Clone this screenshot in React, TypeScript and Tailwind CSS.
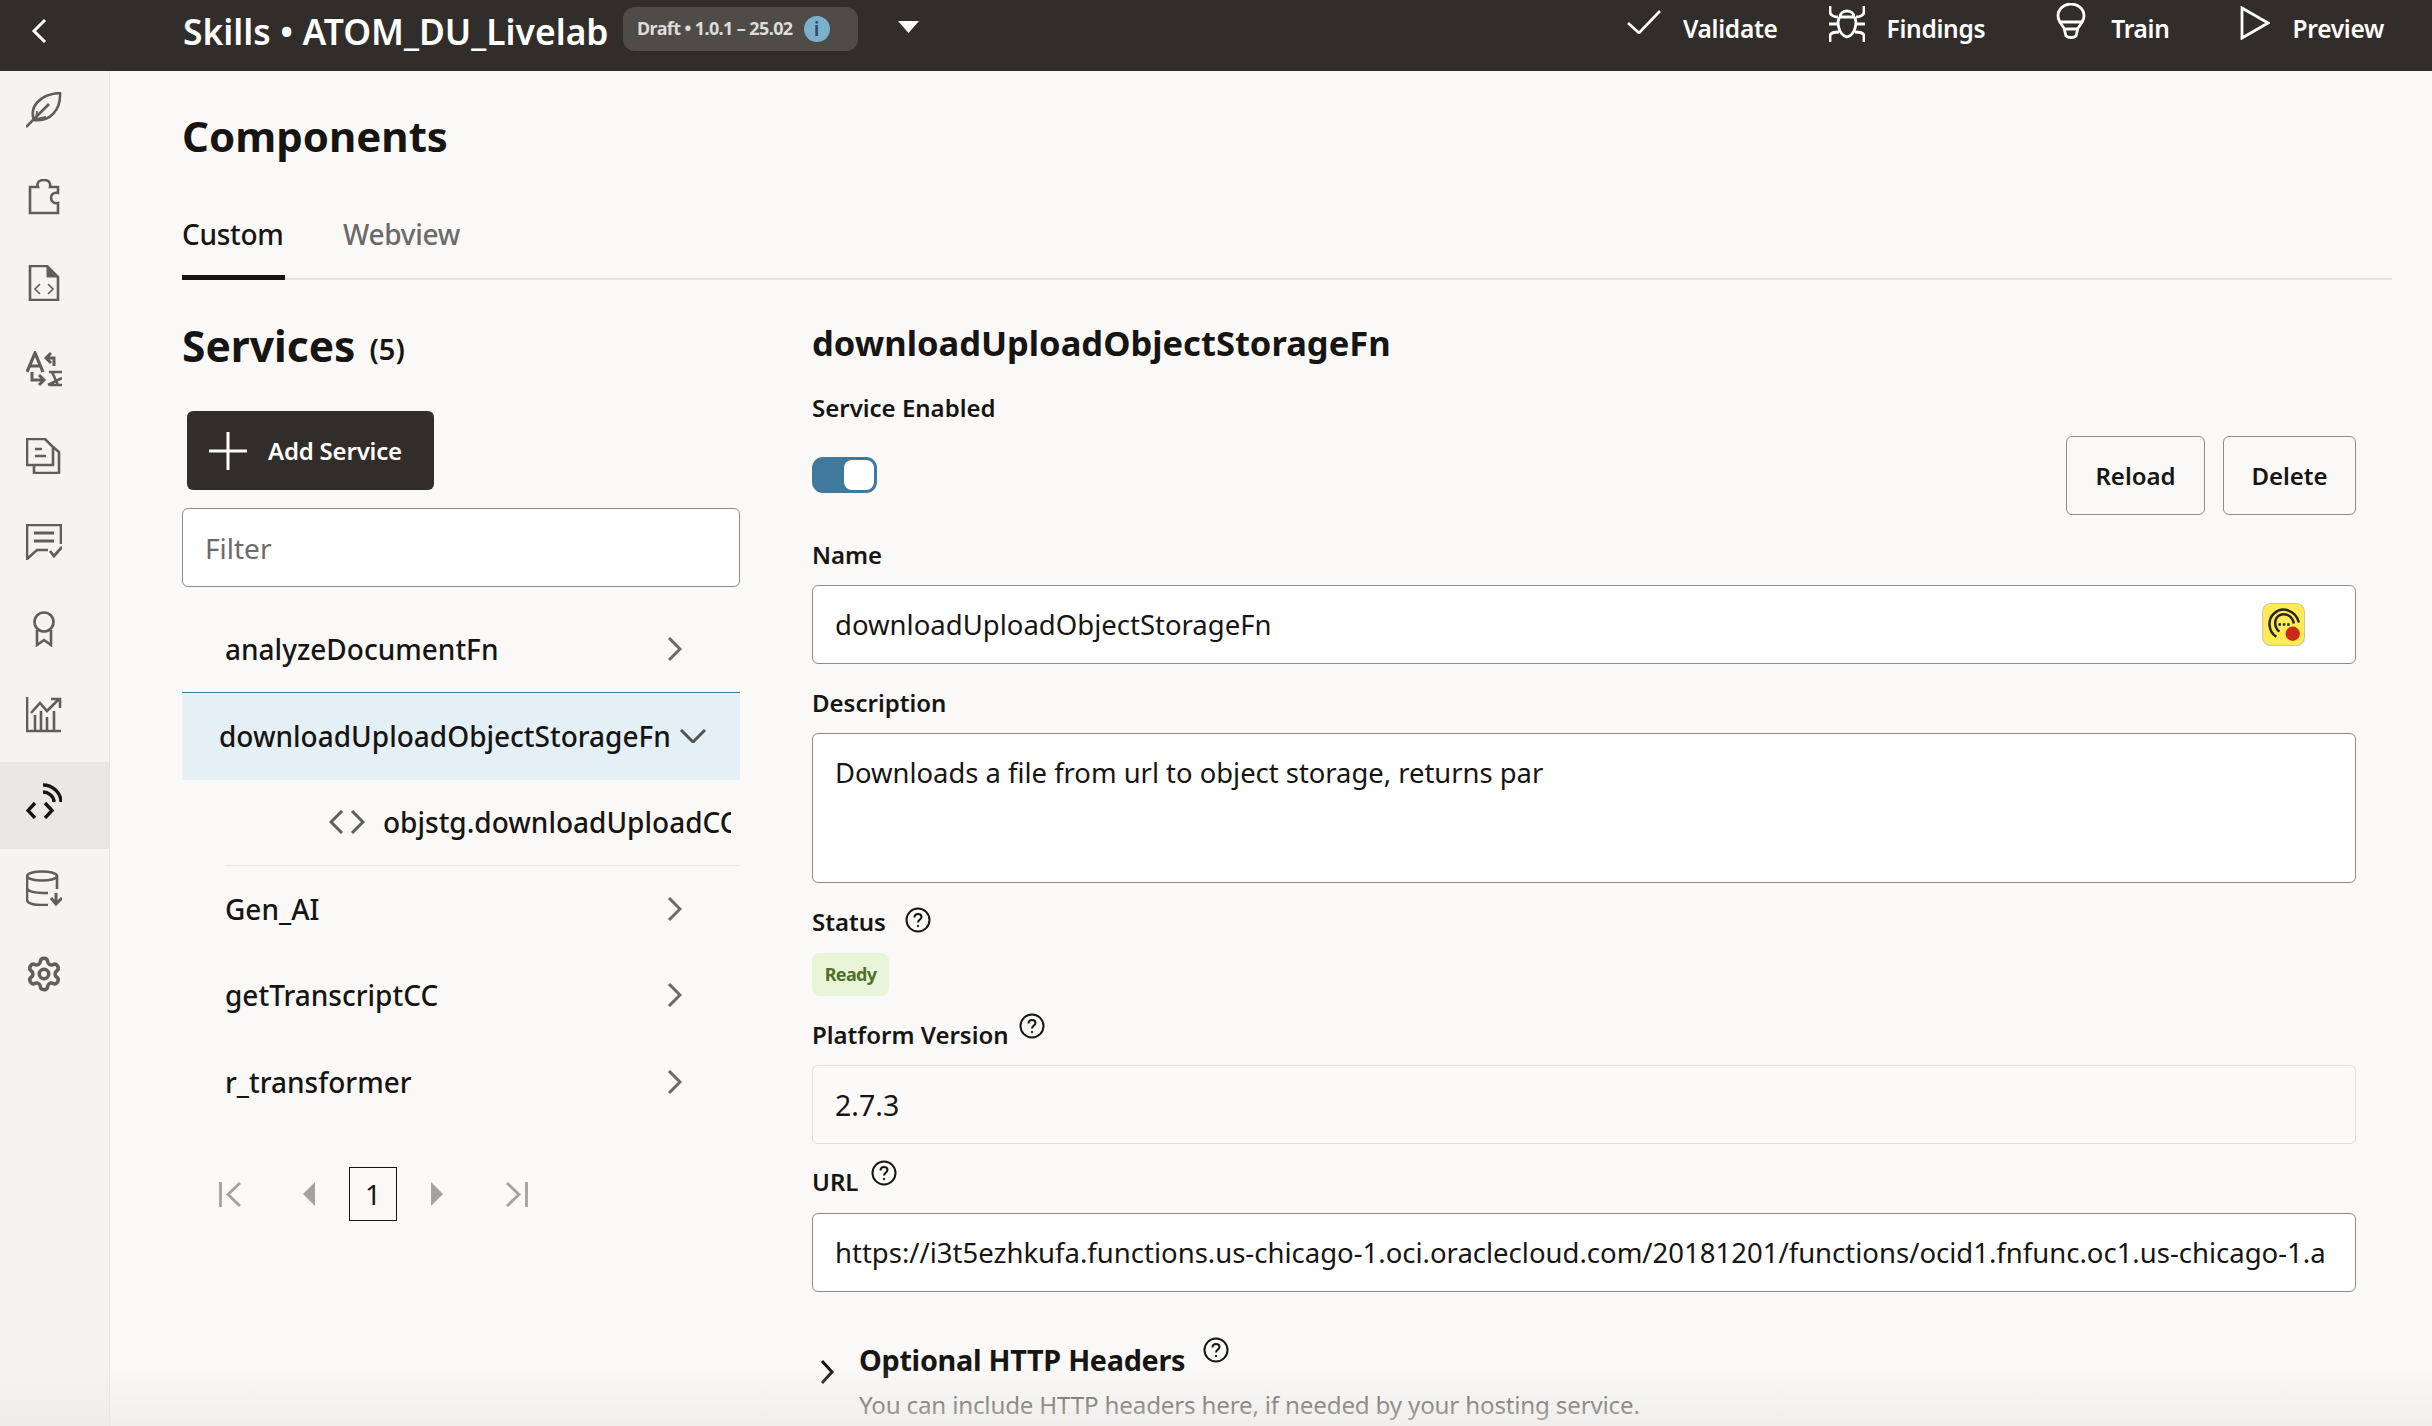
import React from "react";
import { Settings } from "lucide-react";

const Ic = ({ children, className = "" }: { children: React.ReactNode; className?: string }) => (
  <svg viewBox="0 0 36 36" fill="none" stroke="currentColor" strokeWidth="2.6" className={"w-9 h-9 " + className}>
    {children}
  </svg>
);

const sideIcons: React.ReactNode[] = [
  <Ic><path d="M8 28 C3 15 14 2 34 1 C35 18 24 30 8 28 Z" /><path d="M0 35 L23 12" /><path d="M11 19 L10 27 L20 25" strokeWidth="1.8" /></Ic>,
  <Ic><path d="M4 8 H12 C10 3 14 1 18 1 C22 1 25 3 24 8 H32 V14 C27 13 25 16 25 19 C25 22 28 25 32 24 V34 H4 Z" /></Ic>,
  <Ic><path d="M4 1 H21 L32 12 V35 H4 Z" /><path d="M21 2 L31 12 H21 Z" fill="currentColor" strokeWidth="1" /><path d="M14 19 L9 24 L14 29 M22 19 L27 24 L22 29" strokeWidth="1.6" /></Ic>,
  <Ic><path d="M1 21 L9 2 L17 21 M4 15 H14" strokeWidth="3.2" /><path d="M28 15 V7 H20 M25 2 L20 7 L25 12" strokeWidth="3" /><path d="M6 21 V29 H16 M13 24 L18 29 L13 34" strokeWidth="3" /><path d="M23 21 H36 M26 21 L32 34 M22 34 L36 27 M24 34 H36" strokeWidth="2.6" /></Ic>,
  <Ic><path d="M1 1 H19 L27 9 V27 H1 Z" /><path d="M8 28 V35 H33 V14 L27 9" /><path d="M9 11 H16 M9 18 H20" /></Ic>,
  <Ic><path d="M35 20 V1 H1 V35 L11 26 H22" /><path d="M8 9 H28 M8 17 H28" strokeWidth="2.8" /><path d="M24 27 L28 32 L36 23" strokeWidth="2.8" /></Ic>,
  <Ic><circle cx="18" cy="11" r="9.5" /><path d="M11 19 V34 L18 29 L25 34 V19" /></Ic>,
  <Ic><path d="M1 0 V34 H35 M5 16 L14 6 L21 14 L33 2 M25 2 H34 V11" /><path d="M9 33 V18 M15 33 V14 M21 33 V20 M28 33 V14" /></Ic>,
  <Ic><path d="M9 20 L2 27.5 L9 35 M19 20 L26 27.5 L19 35" strokeWidth="3.4" /><path d="M17 2 C26 2 35 9 35 19 M17 9 C22 9 28 13 28 19" strokeWidth="3.4" /></Ic>,
  <Ic><ellipse cx="16" cy="6" rx="15" ry="4.5" /><path d="M1 6 V30 C1 33 7 35 16 35 H22 M31 6 V19 M1 18 C1 21 8 23 17 23 H22" /><path d="M30 23 V33 M25 28 L30 34 L36 28" strokeWidth="3" /></Ic>,
];

const Help = ({ className = "" }: { className?: string }) => (
  <svg viewBox="0 0 26 26" className={"w-[26px] h-[26px] " + className} fill="none" stroke="#161513" strokeWidth="2">
    <circle cx="13" cy="13" r="11.5" />
    <path d="M9.5 10.5 C9.5 8 11 7 13 7 C15 7 16.5 8.2 16.5 10 C16.5 12.5 13 12.5 13 15.5" />
    <circle cx="13" cy="19" r="0.8" fill="#161513" strokeWidth="1" />
  </svg>
);

const Chevron = () => (
  <svg viewBox="0 0 15 24" className="w-[15px] h-6 text-[#6b6a68]" fill="none" stroke="currentColor" strokeWidth="3">
    <path d="M2 1 L13 12 L2 23" />
  </svg>
);

const Row = ({ label }: { label: string }) => (
  <div className="h-[86.5px] flex items-center justify-between pl-[43px] pr-[58px] text-[28px] font-medium text-[#161513]">
    <span>{label}</span>
    <Chevron />
  </div>
);

const inputCls =
  "w-full h-[79px] rounded-md border border-[#8f8d8b] bg-white px-[22px] text-[27.5px] text-[#161513] outline-none";

const Label = ({ children, className = "" }: { children: React.ReactNode; className?: string }) => (
  <div className={"text-[24px] font-semibold text-[#161513] leading-[30px] " + className}>{children}</div>
);

export default function App() {
  return (
    <div className="relative w-[2432px] h-[1426px] overflow-hidden bg-[#faf9f7] font-['Noto_Sans',sans-serif] text-[#161513]">
      <header className="h-[71px] bg-[#312d2a] text-white flex items-center">
        <svg viewBox="0 0 16 24" className="ml-[31px] mb-[9px] w-4 h-6" fill="none" stroke="white" strokeWidth="3">
          <path d="M14 1 L3 12 L14 23" />
        </svg>
        <div className="ml-[136px] w-[425px] whitespace-nowrap text-[35.4px] font-semibold leading-none pb-[8px]">Skills • ATOM_DU_Livelab</div>
        <div className="ml-[15px] mb-[14px] w-[235px] h-[44px] rounded-xl bg-[#4f4c48] flex items-center pl-[14px]">
          <span className="text-[18px] font-bold text-[#dddcda] tracking-[-0.6px]">Draft • 1.0.1 – 25.02</span>
          <span className="ml-[11px] w-[26px] h-[26px] rounded-full bg-[#7eb0cd] text-[#2f4d60] text-[20px] font-semibold flex items-center justify-center leading-none">i</span>
        </div>
        <svg viewBox="0 0 21 12" className="ml-[40px] mb-[17px] w-[21px] h-3"><path d="M0 0 H21 L10.5 12 Z" fill="white" /></svg>

        <div className="ml-auto mb-[16px] pr-[48px] flex items-center text-[24.5px] font-semibold tracking-[-0.3px]">
          <svg viewBox="0 0 34 24" className="w-[34px] h-6 mb-[12px]" fill="none" stroke="white" strokeWidth="2.6"><path d="M1 13 L12 23 L33 1" /></svg>
          <span className="ml-[22px] mb-[-3px]">Validate</span>
          <svg viewBox="0 0 36 36" className="ml-[51px] w-9 h-9 mb-[8px]" fill="none" stroke="white" strokeWidth="2.8">
            <path d="M11 11 C11 3 25 3 25 11 C28 14 28 28 18 31 C8 28 8 14 11 11 Z M11 11 H25" />
            <path d="M1 0 V6 C1 9 5 11 9 11 M35 0 V6 C35 9 31 11 27 11 M0 18 H8 M28 18 H36 M1 36 V30 C1 27 5 26 10 26 M35 36 V30 C35 27 31 26 26 26" />
          </svg>
          <span className="ml-[22px] mb-[-3px]">Findings</span>
          <svg viewBox="0 0 30 36" className="ml-[71px] w-[30px] h-9 mb-[13px]" fill="none" stroke="white" strokeWidth="2.8">
            <path d="M8 25 C4 20 2 17 2 13 C2 6 8 1 15 1 C22 1 28 6 28 13 C28 17 26 20 22 25 L20 33 C18 35 12 35 10 33 Z" />
            <path d="M4 19 H26 M8 26 H22" />
          </svg>
          <span className="ml-[25px] mb-[-3px]">Train</span>
          <svg viewBox="0 0 30 34" className="ml-[70px] w-[30px] h-[34px] mb-[10px]" fill="none" stroke="white" strokeWidth="2.8"><path d="M2 2 L28 17 L2 32 Z" /></svg>
          <span className="ml-[23px] mb-[-3px]">Preview</span>
        </div>
      </header>

      <div className="flex h-[1355px]">
        <aside className="w-[110px] shrink-0 bg-[#f5f4f2] border-r border-[#e6e5e3]">
          {sideIcons.map((ic, i) => (
            <div key={i} className={"h-[86.4px] flex items-center justify-center pb-2 pr-[22px] " + (i === 8 ? "bg-[#e9e8e6] text-[#161513]" : "text-[#5f5e5c]")}>{ic}</div>
          ))}
          <div className="h-[86.4px] flex items-center justify-center pb-2 pr-[22px] text-[#5f5e5c]"><Settings size={38} strokeWidth={2.2} /></div>
        </aside>

        <main className="flex-1 pl-[72px] pr-[40px] min-w-0">
          <h1 className="pt-[39px] text-[42px] font-bold leading-[52px]">Components</h1>
          <div className="mt-[36px] h-[82px] flex border-b-2 border-[#e6e5e3] text-[28px] leading-[38px]">
            <div className="h-[82px] w-[103px] border-b-[5px] border-[#161513] font-medium tracking-[-0.3px] pt-[17px] whitespace-nowrap">Custom</div>
            <div className="ml-[58px] pt-[17px] text-[#6b6a68] font-medium tracking-[-0.3px]">Webview</div>
          </div>

          <div className="flex">
            <section className="w-[558px] shrink-0">
              <div className="mt-[40px] flex items-baseline leading-[52px]">
                <h2 className="text-[42.5px] font-bold">Services</h2>
                <span className="ml-[14px] text-[29px] font-semibold relative -top-[2px]">(5)</span>
              </div>
              <button className="ml-[5px] mt-[34px] w-[247px] h-[79px] rounded-md bg-[#312d2a] text-white flex items-center pl-[22px]">
                <svg viewBox="0 0 38 38" className="w-[38px] h-[38px]" stroke="white" strokeWidth="3"><path d="M19 0 V38 M0 19 H38" /></svg>
                <span className="ml-[21px] text-[24px] font-semibold tracking-[-0.2px]">Add Service</span>
              </button>
              <input readOnly placeholder="Filter" className="mt-[18px] w-full h-[79px] rounded-md border border-[#8f8d8b] bg-white px-[22px] text-[28px] outline-none placeholder:text-[#6b6a68]" />

              <div className="mt-[19px]"><Row label="analyzeDocumentFn" /></div>
              <div className="h-[88px] mt-[-1px] bg-[#e4f0f6] border-t border-[#3f7a9d] flex items-center pl-[37px] text-[28px] font-medium">
                <span>downloadUploadObjectStorageFn</span>
                <svg viewBox="0 0 26 14" className="ml-[9px] w-[26px] h-[14px] text-[#55534f]" fill="none" stroke="currentColor" strokeWidth="3"><path d="M1 1 L13 13 L25 1" /></svg>
              </div>
              <div className="h-[86px] ml-[43px] border-b border-[#e9e8e6] flex items-center pl-[104px]">
                <svg viewBox="0 0 36 24" className="w-9 h-6 shrink-0 text-[#5f5e5c]" fill="none" stroke="currentColor" strokeWidth="3"><path d="M13 1 L2 12 L13 23 M23 1 L34 12 L23 23" /></svg>
                <span className="ml-[18px] w-[348px] overflow-hidden whitespace-nowrap text-[28px] font-medium">objstg.downloadUploadCC</span>
              </div>
              <Row label="Gen_AI" />
              <Row label="getTranscriptCC" />
              <Row label="r_transformer" />

              <div className="mt-[42px] flex items-center h-[54px] text-[#a3a2a0]">
                <svg viewBox="0 0 23 25" className="ml-[37px] w-[23px] h-[25px]" fill="none" stroke="currentColor" strokeWidth="2.8"><path d="M1.5 0 V25 M21 1 L9 12.5 L21 24" /></svg>
                <svg viewBox="0 0 12 24" className="ml-[61px] w-3 h-6"><path d="M12 0 V24 L0 12 Z" fill="currentColor" /></svg>
                <div className="ml-[34px] w-[48px] h-[54px] border border-[#161513] flex items-center justify-center text-[#161513] text-[28px]">1</div>
                <svg viewBox="0 0 12 24" className="ml-[34px] w-3 h-6"><path d="M0 0 V24 L12 12 Z" fill="currentColor" /></svg>
                <svg viewBox="0 0 23 25" className="ml-[62px] w-[23px] h-[25px]" fill="none" stroke="currentColor" strokeWidth="2.8"><path d="M21.5 0 V25 M2 1 L14 12.5 L2 24" /></svg>
              </div>
            </section>

            <section className="ml-[72px] w-[1544px] shrink-0">
              <h2 className="mt-[41px] text-[34.5px] font-bold leading-[44px]">downloadUploadObjectStorageFn</h2>
              <div className="flex justify-between">
                <div>
                  <Label className="mt-[28px]">Service Enabled</Label>
                  <div className="mt-[34px] w-[65px] h-[36px] rounded-[11px] bg-[#3f7a9d] flex items-center justify-end pr-[3px]">
                    <div className="w-[30px] h-[30px] rounded-[8px] bg-white" />
                  </div>
                </div>
                <div className="mt-[71px] flex gap-[18px]">
                  <button className="w-[139px] h-[79px] rounded-md border border-[#8f8d8b] text-[24px] font-semibold">Reload</button>
                  <button className="w-[133px] h-[79px] rounded-md border border-[#8f8d8b] text-[24px] font-semibold">Delete</button>
                </div>
              </div>

              <Label className="mt-[25px]">Name</Label>
              <div className="relative mt-[15px]">
                <input readOnly value="downloadUploadObjectStorageFn" className={inputCls} />
                <svg viewBox="0 0 42 42" className="absolute right-[51px] top-[18px] w-[43px] h-[43px]">
                  <rect x="0.5" y="0.5" width="41" height="41" rx="8" fill="#fdeb55" stroke="#c9c5b0" />
                  <path d="M14 33 C6 28 5 16 12 10 C20 3 33 7 36 19" fill="none" stroke="#262422" strokeWidth="2.4" />
                  <path d="M17 28 C11 23 12 15 17 12 C23 9 30 13 31 20" fill="none" stroke="#262422" strokeWidth="2.4" />
                  <path d="M16 21 H27" stroke="#262422" strokeWidth="2.4" strokeDasharray="2.5 1.8" />
                  <circle cx="30" cy="30" r="7" fill="#c92a14" />
                </svg>
              </div>

              <Label className="mt-[24px]">Description</Label>
              <textarea readOnly value="Downloads a file from url to object storage, returns par" className="mt-[15px] block w-full h-[150px] resize-none rounded-md border border-[#8f8d8b] bg-white px-[22px] pt-[20px] text-[27.4px] leading-[38px] outline-none" />

              <div className="mt-[24px] flex items-center gap-[19px]">
                <Label>Status</Label>
                <Help className="mb-[4px]" />
              </div>
              <div className="mt-[16px] w-[77px] h-[43px] rounded-lg bg-[#e8f5d9] text-[#4f7029] text-[18px] font-bold tracking-[-0.7px] flex items-center justify-center">Ready</div>

              <div className="mt-[24px] flex items-start gap-[10px] h-[30px]">
                <Label>Platform Version</Label>
                <Help className="mt-[-7px]" />
              </div>
              <input readOnly value="2.7.3" className="mt-[15px] w-full h-[79px] rounded-md border border-[#e0dfdd] bg-[#fbfaf9] px-[22px] text-[28.5px] outline-none" />

              <div className="mt-[23px] flex items-start gap-[13px] h-[30px]">
                <Label>URL</Label>
                <Help className="mt-[-7px]" />
              </div>
              <input readOnly value="https://i3t5ezhkufa.functions.us-chicago-1.oci.oraclecloud.com/20181201/functions/ocid1.fnfunc.oc1.us-chicago-1.a" className={"mt-[16px] " + inputCls} />

              <div className="mt-[48px] flex items-start">
                <svg viewBox="0 0 14 24" className="ml-[8px] mt-[20px] w-[14px] h-6" fill="none" stroke="#161513" strokeWidth="3"><path d="M2 1 L12 12 L2 23" /></svg>
                <div className="ml-[25px]">
                  <div className="flex items-start gap-[18px]">
                    <div className="text-[28.8px] font-bold leading-[40px] tracking-[-0.3px]">Optional HTTP Headers</div>
                    <Help className="mt-[-3px]" />
                  </div>
                  <div className="mt-[9px] text-[24.2px] text-[#55534f] leading-[32px] tracking-[-0.2px]">You can include HTTP headers here, if needed by your hosting service.</div>
                </div>
              </div>
            </section>
          </div>
        </main>
      </div>

      <div className="absolute inset-x-0 bottom-0 h-[60px] bg-gradient-to-b from-transparent to-[#e9e8e6]/60 pointer-events-none" />
    </div>
  );
}
